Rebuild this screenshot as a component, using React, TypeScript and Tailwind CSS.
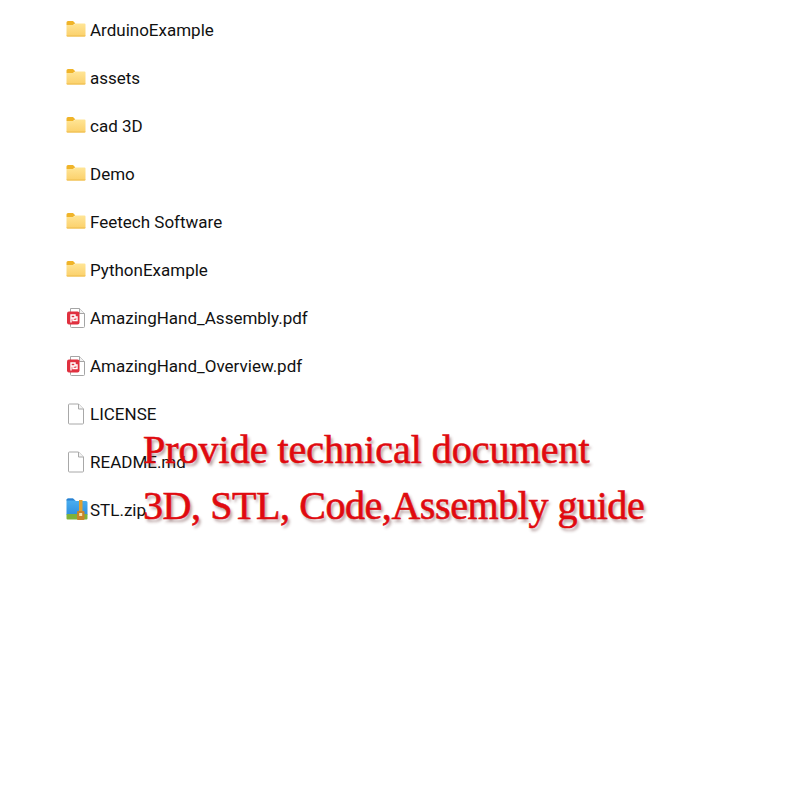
import React from 'react';

type FileKind = 'folder' | 'pdf' | 'blank' | 'zip';

const FILES: { name: string; kind: FileKind }[] = [
  { name: 'ArduinoExample', kind: 'folder' },
  { name: 'assets', kind: 'folder' },
  { name: 'cad 3D', kind: 'folder' },
  { name: 'Demo', kind: 'folder' },
  { name: 'Feetech Software', kind: 'folder' },
  { name: 'PythonExample', kind: 'folder' },
  { name: 'AmazingHand_Assembly.pdf', kind: 'pdf' },
  { name: 'AmazingHand_Overview.pdf', kind: 'pdf' },
  { name: 'LICENSE', kind: 'blank' },
  { name: 'README.md', kind: 'blank' },
  { name: 'STL.zip', kind: 'zip' },
];

const FolderIcon = ({ id }: { id: string }) => (
  <svg width="20" height="20" viewBox="0 1 20 20">
    <defs>
      <linearGradient id={id} x1="0" y1="0" x2="0" y2="1">
        <stop offset="0" stopColor="#ffe596" />
        <stop offset="1" stopColor="#fbd06a" />
      </linearGradient>
    </defs>
    <path d="M0.5 3.5 Q0.5 2 2 2 H7 L9.5 4.5 H9 L7 6 H0.5 Z" fill="#f0b429" />
    <path d="M0.5 6 H7.5 L9.5 4.5 H18.5 Q19.5 4.5 19.5 5.5 V16.5 Q19.5 17.5 18.5 17.5 H1.5 Q0.5 17.5 0.5 16.5 Z" fill={`url(#${id})`} />
    <path d="M0.5 16.5 H19.5 V16.8 Q19.5 17.5 18.5 17.5 H1.5 Q0.5 17.5 0.5 16.8 Z" fill="#eebb4d" />
  </svg>
);

const PdfIcon = () => (
  <svg width="20" height="22" viewBox="0 0 20 22">
    <path d="M4.5 1.5 H13.5 L18.5 6.5 V19.5 Q18.5 20.5 17.5 20.5 H5.5 Q4.5 20.5 4.5 19.5 Z" fill="#fff" stroke="#a5a5a5" />
    <path d="M13.5 1.5 V6.5 H18.5" fill="#f2f2f2" stroke="#a5a5a5" />
    <rect x="1" y="4.5" width="12.5" height="13" rx="2" fill="#e0303f" />
    <path d="M5 15.5 V8 H9 V11 H5 M7 11 V13.5 H11 V10 H9" fill="none" stroke="#fff" strokeWidth="1.4" />
  </svg>
);

const BlankIcon = () => (
  <svg width="20" height="22" viewBox="0 -0.5 20 22">
    <path d="M3.5 0.5 H12.5 L17.5 5.5 V19.5 Q17.5 20.5 16.5 20.5 H3.5 Q2.5 20.5 2.5 19.5 V1.5 Q2.5 0.5 3.5 0.5 Z" fill="#fff" stroke="#a8a8a8" />
    <path d="M12.5 0.5 V5.5 H17.5" fill="#f4f4f4" stroke="#a8a8a8" />
  </svg>
);

const ZipIcon = () => (
  <svg width="22" height="24" viewBox="0 1 22 24">
    <defs>
      <linearGradient id="zipBlue" x1="0" y1="0" x2="0" y2="1">
        <stop offset="0" stopColor="#4db2f0" />
        <stop offset="1" stopColor="#2f8fe0" />
      </linearGradient>
    </defs>
    <path d="M0.5 3 Q0.5 1.5 2 1.5 H7 L10 4 H20 Q21.5 4 21.5 5.5 V18 H0.5 Z" fill="url(#zipBlue)" />
    <path d="M0.5 3 Q0.5 1.5 2 1.5 H7 L9 3.5 H0.5 Z" fill="#2a7fd0" />
    <rect x="0.5" y="17" width="21" height="5.5" rx="1" fill="#7fb23a" />
    <rect x="13" y="3" width="3.5" height="12" fill="#e0a030" />
    <rect x="11" y="14" width="7.5" height="9" rx="1" fill="#c9842a" />
    <rect x="13.2" y="16" width="3" height="3" fill="#fbe6b0" />
  </svg>
);

const FileIcon = ({ kind, id }: { kind: FileKind; id: string }) => {
  if (kind === 'folder') return <FolderIcon id={id} />;
  if (kind === 'pdf') return <PdfIcon />;
  if (kind === 'zip') return <ZipIcon />;
  return <BlankIcon />;
};

export default function App() {
  return (
    <div className="relative w-[800px] h-[800px] bg-white overflow-hidden font-['Roboto',sans-serif]">
      {/* File list */}
      <div className="flex flex-col pt-[6px] pl-[66px]">
        {FILES.map((file, i) => (
          <div key={file.name} className="flex items-center h-[48px]">
            <div className="w-[24px] flex items-center">
              <FileIcon kind={file.kind} id={`folderFill${i}`} />
            </div>
            <span className="text-[17px] text-[#111111] leading-none">{file.name}</span>
          </div>
        ))}
      </div>

      {/* Red caption over the list */}
      <div className="absolute left-[143px] top-[422px] flex flex-col font-['Liberation_Serif',serif] text-[40px] leading-[56px] text-[#e00a0f] [-webkit-text-stroke:0.6px_#e00a0f] [text-shadow:2px_3px_3px_rgba(90,40,40,0.45)] whitespace-nowrap">
        <span>Provide technical document</span>
        <span className="tracking-[-0.43px]">3D, STL, Code,Assembly guide</span>
      </div>
    </div>
  );
}
